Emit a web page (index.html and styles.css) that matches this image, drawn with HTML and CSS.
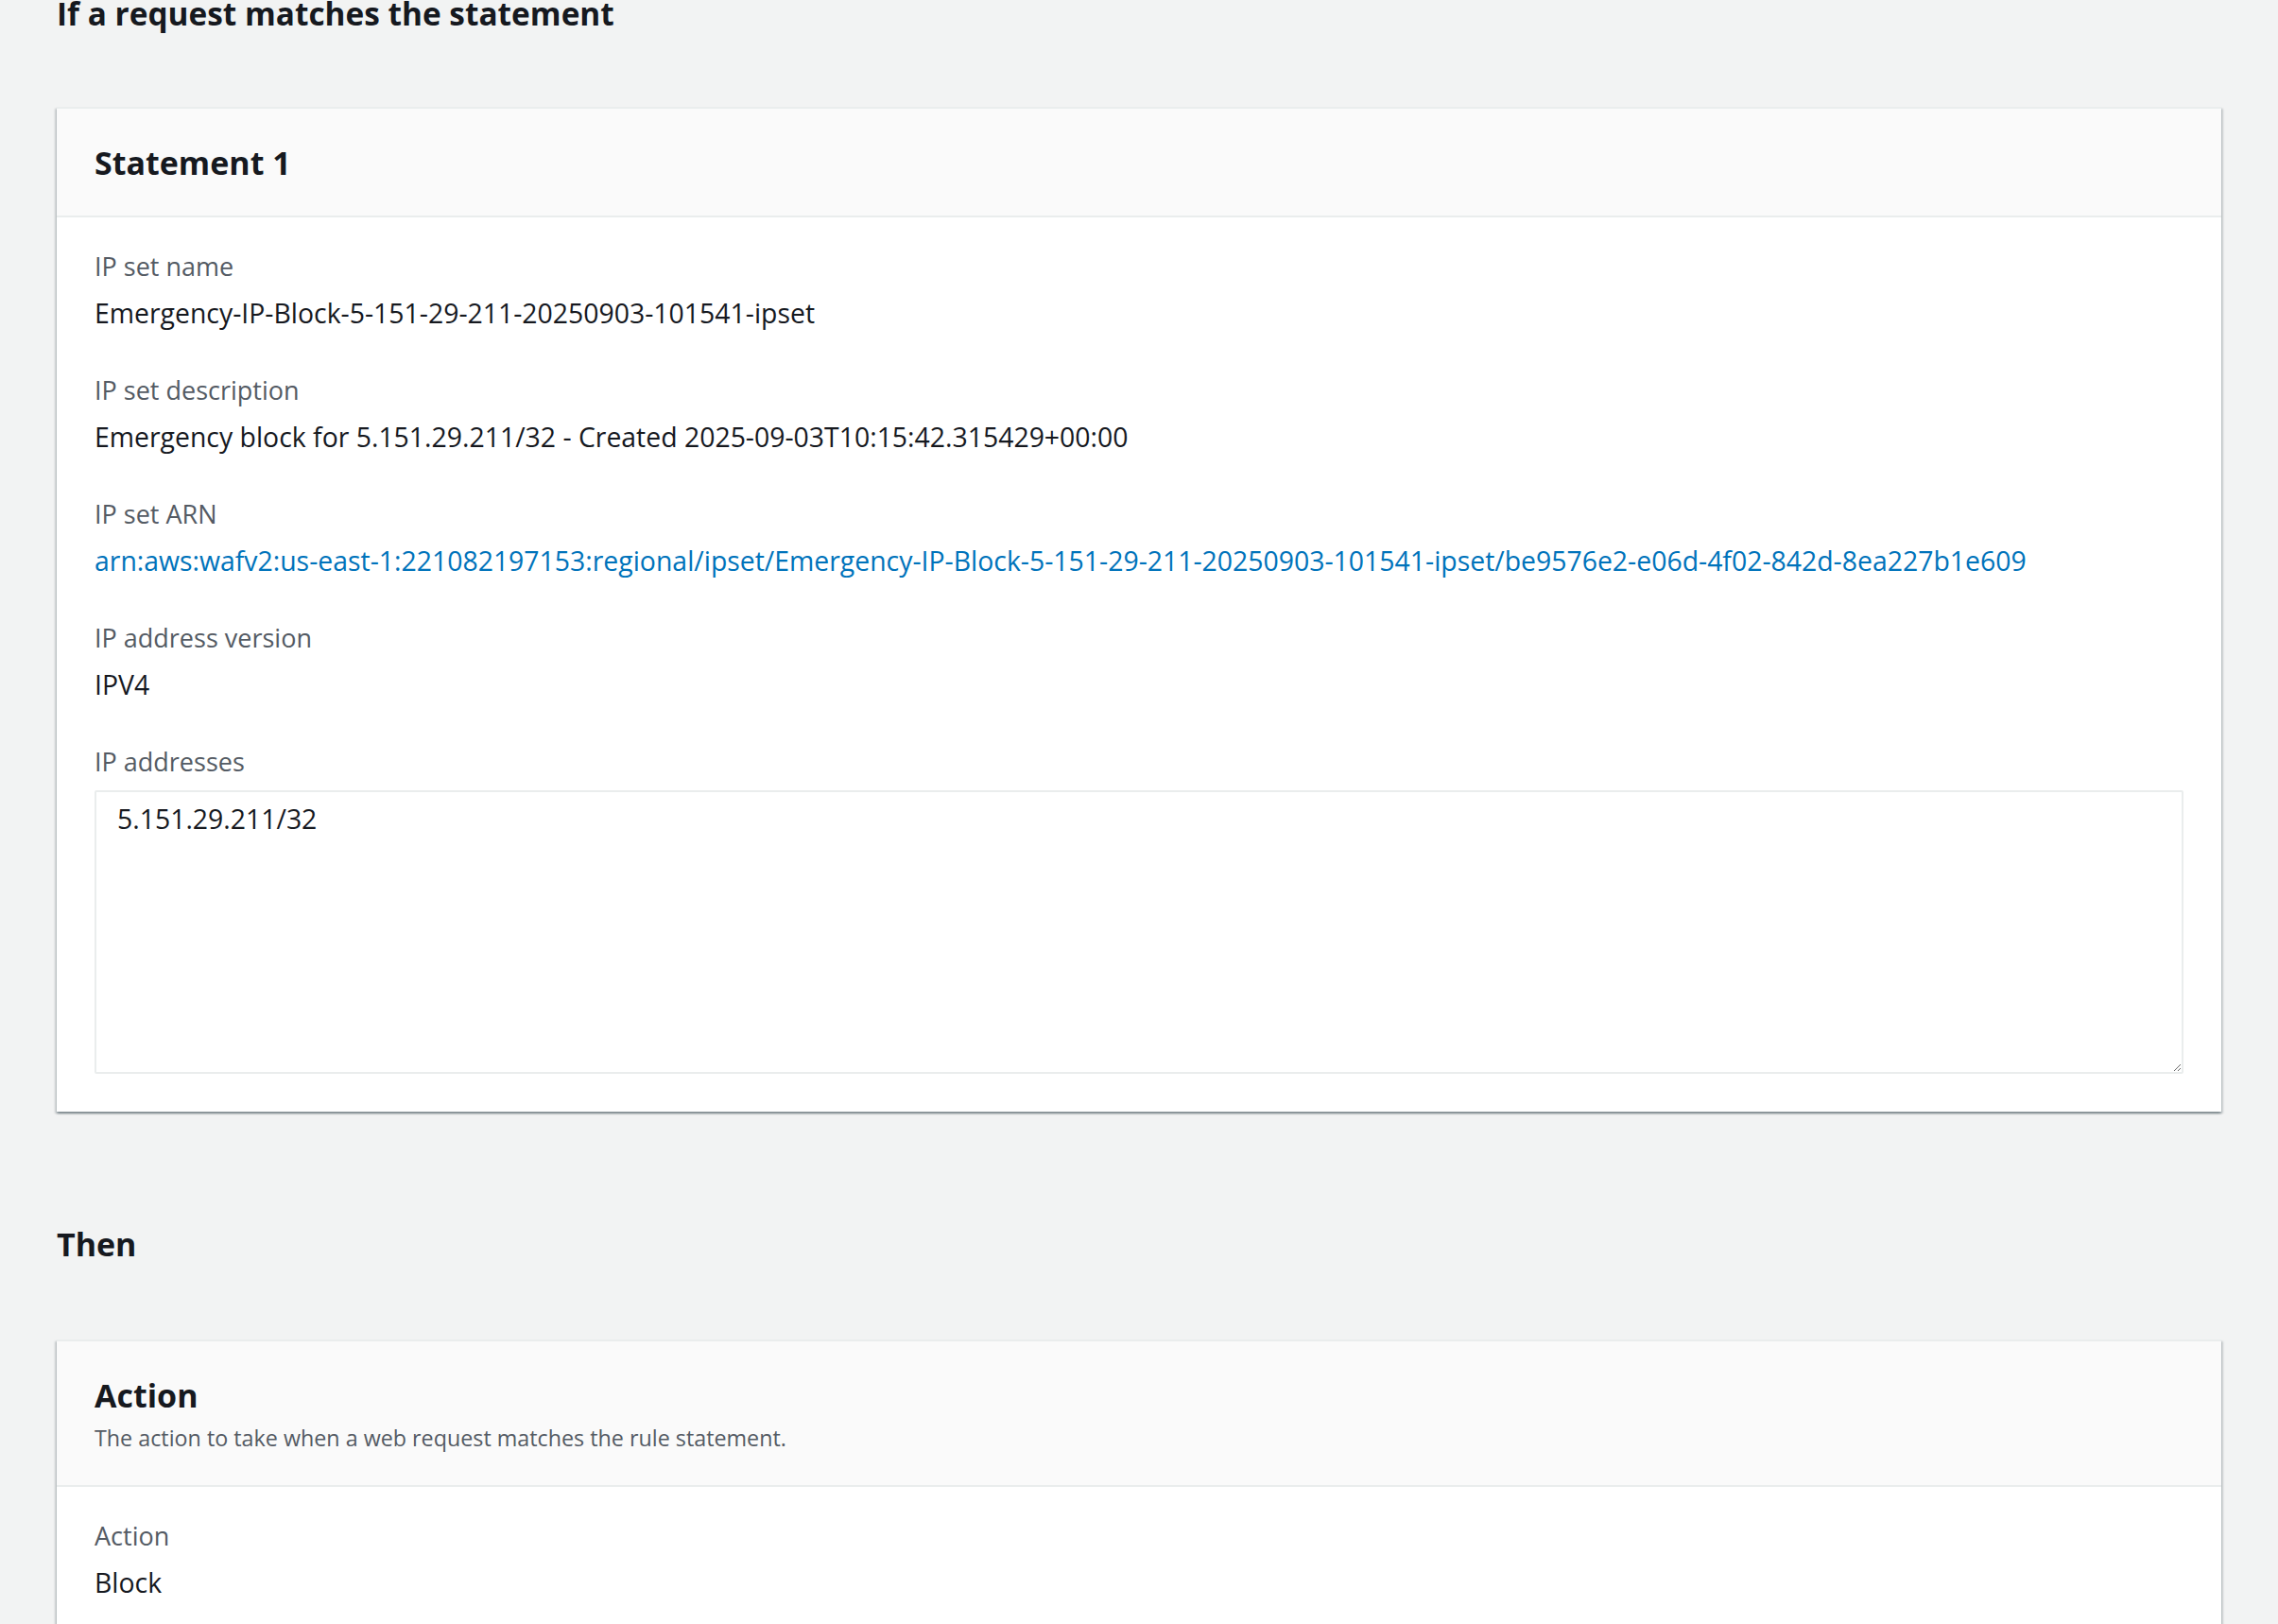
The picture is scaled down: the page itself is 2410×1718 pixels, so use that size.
FILE: index.html
```html
<!DOCTYPE html>
<html lang="en">
<head>
    <meta charset="UTF-8">
    <meta name="viewport" content="width=device-width, initial-scale=1.0">
    <title>Rule details</title>
    <link rel="stylesheet" href="styles.css">
</head>
<body>

<div class="page">
    <h2 class="section-title first">If a request matches the statement</h2>

    <div class="card">
        <div class="card-header">
            <h3>Statement 1</h3>
        </div>
        <div class="card-body">
            <div class="field">
                <div class="label">IP set name</div>
                <div class="value">Emergency-IP-Block-5-151-29-211-20250903-101541-ipset</div>
            </div>
            <div class="field">
                <div class="label">IP set description</div>
                <div class="value">Emergency block for 5.151.29.211/32 - Created 2025-09-03T10:15:42.315429+00:00</div>
            </div>
            <div class="field">
                <div class="label">IP set ARN</div>
                <div class="value"><a href="#" class="link">arn:aws:wafv2:us-east-1:221082197153:regional/ipset/Emergency-IP-Block-5-151-29-211-20250903-101541-ipset/be9576e2-e06d-4f02-842d-8ea227b1e609</a></div>
            </div>
            <div class="field">
                <div class="label">IP address version</div>
                <div class="value">IPV4</div>
            </div>
            <div class="field">
                <div class="label">IP addresses</div>
                <textarea class="ip-list" readonly>5.151.29.211/32</textarea>
            </div>
        </div>
    </div>

    <h2 class="section-title">Then</h2>

    <div class="card">
        <div class="card-header">
            <h3>Action</h3>
            <p class="desc">The action to take when a web request matches the rule statement.</p>
        </div>
        <div class="card-body">
            <div class="field">
                <div class="label">Action</div>
                <div class="value">Block</div>
            </div>
        </div>
    </div>
</div>

</body>
</html>
```

FILE: styles.css
```css
body {
    margin: 0;
    padding: 0;
    background-color: #f2f3f3;
    font-family: "Open Sans", "Noto Sans", Arial, sans-serif;
    color: #16191f;
}
.page {
    padding: 0 60px;
}
.section-title {
    margin: 118px 0 79px 0;
    font-size: 34px;
    line-height: 44px;
    font-weight: 700;
    color: #16191f;
}
.section-title.first {
    margin-top: -8px;
    margin-bottom: 77px;
    font-size: 33.4px;
}
.card {
    background-color: #fff;
    border-top: 2px solid #eaeded;
    box-shadow: 0 2px 2px 0 rgba(0, 28, 36, 0.3), 2px 2px 2px 0 rgba(0, 28, 36, 0.15), -2px 2px 2px 0 rgba(0, 28, 36, 0.15);
}
.card-header {
    background-color: #fafafa;
    border-bottom: 2px solid #eaeded;
    padding: 35px 40px 34px;
}
.card-header h3 {
    margin: 0;
    font-size: 34px;
    line-height: 44px;
    font-weight: 700;
}
.card-header .desc {
    margin: 7px 0 0 0;
    font-size: 23.3px;
    line-height: 32px;
    color: #545b64;
}
.card-body {
    padding: 32px 40px 40px;
}
.field {
    margin-bottom: 42px;
}
.field:last-child {
    margin-bottom: 0;
}
.label {
    font-size: 27px;
    line-height: 40px;
    color: #545b64;
    margin-bottom: 9px;
}
.value {
    font-size: 28.4px;
    line-height: 40px;
    color: #16191f;
}
.link {
    color: #0073bb;
    text-decoration: none;
}
.ip-list {
    display: block;
    box-sizing: border-box;
    width: 100%;
    height: 300px;
    margin-top: 10px;
    padding: 8px 22px;
    border: 2px solid #eaeded;
    border-radius: 2px;
    font-family: "Open Sans", "Noto Sans", Arial, sans-serif;
    font-size: 28.4px;
    line-height: 40px;
    color: #16191f;
    background-color: #fff;
    resize: vertical;
    outline: none;
}
```
